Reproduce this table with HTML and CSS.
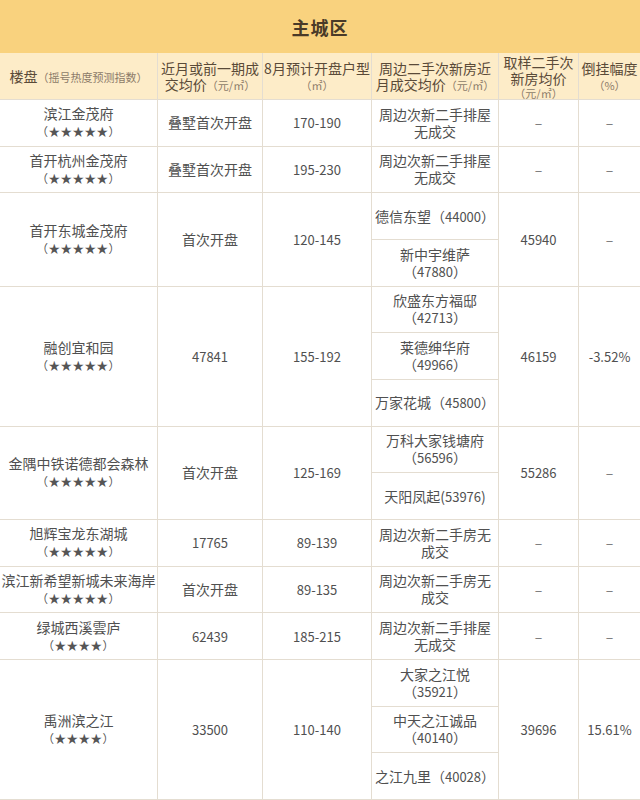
FILE: index.html
```html
<!DOCTYPE html>
<html lang="zh-CN">
<head>
<meta charset="utf-8">
<title>主城区</title>
<link rel="stylesheet" href="styles.css">
</head>
<body>
<div class="sheet">
  <div class="title">主城区</div>
  <div class="grid">
    <div class="cell head"><span class="ln">楼盘<small>（摇号热度预测指数）</small></span></div>
    <div class="cell head"><span><span class="ln">近月或前一期成</span><span class="ln">交均价<small>（元/㎡）</small></span></span></div>
    <div class="cell head"><span><span class="ln">8月预计开盘户型</span><span class="ln"><small>（㎡）</small></span></span></div>
    <div class="cell head"><span><span class="ln">周边二手次新房近</span><span class="ln">月成交均价<small>（元/㎡）</small></span></span></div>
    <div class="cell head"><span><span class="ln">取样二手次</span><span class="ln">新房均价</span><span class="ln sm"><small>（元/㎡）</small></span></span></div>
    <div class="cell head"><span><span class="ln">倒挂幅度</span><span class="ln"><small>（%）</small></span></span></div>

    <div class="cell"><span>滨江金茂府<br><i class="stars">（★★★★★）</i></span></div>
    <div class="cell">叠墅首次开盘</div>
    <div class="cell num">170-190</div>
    <div class="cell"><span>周边次新二手排屋<br>无成交</span></div>
    <div class="cell dash">–</div>
    <div class="cell dash">–</div>

    <div class="cell"><span>首开杭州金茂府<br><i class="stars">（★★★★★）</i></span></div>
    <div class="cell">叠墅首次开盘</div>
    <div class="cell num">195-230</div>
    <div class="cell"><span>周边次新二手排屋<br>无成交</span></div>
    <div class="cell dash">–</div>
    <div class="cell dash">–</div>

    <div class="cell span2"><span>首开东城金茂府<br><i class="stars">（★★★★★）</i></span></div>
    <div class="cell span2">首次开盘</div>
    <div class="cell span2 num">120-145</div>
    <div class="cell">德信东望（<b class="num">44000</b>）</div>
    <div class="cell span2 num">45940</div>
    <div class="cell span2 dash">–</div>
    <div class="cell"><span>新中宇维萨<br>（<b class="num">47880</b>）</span></div>

    <div class="cell span3"><span>融创宜和园<br><i class="stars">（★★★★★）</i></span></div>
    <div class="cell span3 num">47841</div>
    <div class="cell span3 num">155-192</div>
    <div class="cell"><span>欣盛东方福邸<br>（<b class="num">42713</b>）</span></div>
    <div class="cell span3 num">46159</div>
    <div class="cell span3 num">-3.52%</div>
    <div class="cell"><span>莱德绅华府<br>（<b class="num">49966</b>）</span></div>
    <div class="cell">万家花城（<b class="num">45800</b>）</div>

    <div class="cell span2"><span>金隅中铁诺德都会森林<br><i class="stars">（★★★★★）</i></span></div>
    <div class="cell span2">首次开盘</div>
    <div class="cell span2 num">125-169</div>
    <div class="cell"><span>万科大家钱塘府<br>（<b class="num">56596</b>）</span></div>
    <div class="cell span2 num">55286</div>
    <div class="cell span2 dash">–</div>
    <div class="cell">天阳凤起(<b class="num">53976</b>)</div>

    <div class="cell"><span>旭辉宝龙东湖城<br><i class="stars">（★★★★★）</i></span></div>
    <div class="cell num">17765</div>
    <div class="cell num">89-139</div>
    <div class="cell"><span>周边次新二手房无<br>成交</span></div>
    <div class="cell dash">–</div>
    <div class="cell dash">–</div>

    <div class="cell"><span>滨江新希望新城未来海岸<br><i class="stars">（★★★★★）</i></span></div>
    <div class="cell">首次开盘</div>
    <div class="cell num">89-135</div>
    <div class="cell"><span>周边次新二手房无<br>成交</span></div>
    <div class="cell dash">–</div>
    <div class="cell dash">–</div>

    <div class="cell"><span>绿城西溪雲庐<br><i class="stars">（★★★★）</i></span></div>
    <div class="cell num">62439</div>
    <div class="cell num">185-215</div>
    <div class="cell"><span>周边次新二手排屋<br>无成交</span></div>
    <div class="cell dash">–</div>
    <div class="cell dash">–</div>

    <div class="cell span3"><span>禹洲滨之江<br><i class="stars">（★★★★）</i></span></div>
    <div class="cell span3 num">33500</div>
    <div class="cell span3 num">110-140</div>
    <div class="cell"><span>大家之江悦<br>（<b class="num">35921</b>）</span></div>
    <div class="cell span3 num">39696</div>
    <div class="cell span3 num">15.61%</div>
    <div class="cell"><span>中天之江诚品<br>（<b class="num">40140</b>）</span></div>
    <div class="cell">之江九里（<b class="num">40028</b>）</div>
  </div>
</div>
</body>
</html>
```

FILE: styles.css
```css
html, body {
  margin: 0;
  padding: 0;
  background: #ffffff;
}

.sheet {
  width: 640px;
  height: 800px;
  display: flex;
  flex-direction: column;
  font-family: "Noto Sans CJK SC", "Noto Sans", sans-serif;
  color: #505050;
  font-size: 14px;
}

.title {
  height: 53px;
  flex: none;
  background: #f9d27e;
  color: #4a3a28;
  font-size: 18px;
  font-weight: 700;
  display: flex;
  align-items: center;
  justify-content: center;
  letter-spacing: 1px;
}

.grid {
  flex: 1;
  display: grid;
  grid-template-columns: 157px 104px 108px 126px 79px 61px;
  grid-template-rows: 46px repeat(15, 1fr);
  gap: 1px;
  padding-bottom: 1px;
  background: #e4ddd1;
}

.cell {
  background: #ffffff;
  display: flex;
  align-items: center;
  justify-content: center;
  text-align: center;
  line-height: 17px;
  white-space: nowrap;
  overflow: hidden;
}

.head {
  background: #fdecc8;
  color: #5a4a38;
  line-height: 16px;
}

.head .ln {
  display: block;
  height: 16px;
  line-height: 16px;
}

.head .ln.sm {
  height: 13px;
  line-height: 13px;
}

.head small {
  font-size: 11px;
  line-height: 11px;
  color: #8c7b68;
}

.span2 { grid-row: span 2; }
.span3 { grid-row: span 3; }

.stars {
  font-style: normal;
  font-size: 11.5px;
  color: #555555;
  letter-spacing: 0.5px;
}

.num, b.num {
  font-weight: 400;
  font-size: 13px;
}

.dash {
  color: #777777;
}
```
